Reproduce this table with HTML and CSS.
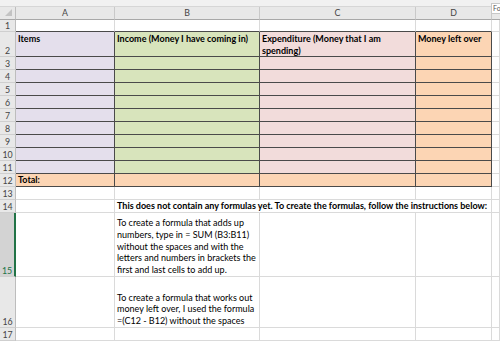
FILE: index.html
```html
<!DOCTYPE html>
<html>
<head>
<meta charset="utf-8">
<link rel="stylesheet" href="styles.css">
</head>
<body>
<div class="sheet">
  <div class="strip"></div>

  <div class="corner"><svg width="8" height="8" viewBox="0 0 8 8"><polygon points="7,0 7,7 0,7" fill="#c3c3c3"/></svg></div>
  <div class="ch">A</div><div class="ch">B</div><div class="ch">C</div><div class="ch">D</div><div class="ch last"></div>

  <div class="rh">1</div><div class="c above"></div><div class="c above"></div><div class="c above"></div><div class="c above"></div><div class="c"></div>

  <div class="rh">2</div>
  <div class="c t pa tp"><b>Items</b></div>
  <div class="c t pb tp"><b>Income (Money I have coming in)</b></div>
  <div class="c t pc tp"><b>Expenditure (Money that I am<br>spending)</b></div>
  <div class="c t pd tp"><b>Money left over</b></div>
  <div class="c"></div>

  <div class="rh">3</div><div class="c t pa"></div><div class="c t pb"></div><div class="c t pc"></div><div class="c t pd"></div><div class="c"></div>
  <div class="rh">4</div><div class="c t pa"></div><div class="c t pb"></div><div class="c t pc"></div><div class="c t pd"></div><div class="c"></div>
  <div class="rh">5</div><div class="c t pa"></div><div class="c t pb"></div><div class="c t pc"></div><div class="c t pd"></div><div class="c"></div>
  <div class="rh">6</div><div class="c t pa"></div><div class="c t pb"></div><div class="c t pc"></div><div class="c t pd"></div><div class="c"></div>
  <div class="rh">7</div><div class="c t pa"></div><div class="c t pb"></div><div class="c t pc"></div><div class="c t pd"></div><div class="c"></div>
  <div class="rh">8</div><div class="c t pa"></div><div class="c t pb"></div><div class="c t pc"></div><div class="c t pd"></div><div class="c"></div>
  <div class="rh">9</div><div class="c t pa"></div><div class="c t pb"></div><div class="c t pc"></div><div class="c t pd"></div><div class="c"></div>
  <div class="rh">10</div><div class="c t pa"></div><div class="c t pb"></div><div class="c t pc"></div><div class="c t pd"></div><div class="c"></div>
  <div class="rh">11</div><div class="c t pa"></div><div class="c t pb"></div><div class="c t pc"></div><div class="c t pd"></div><div class="c"></div>

  <div class="rh">12</div>
  <div class="c t po"><b>Total:</b></div><div class="c t po"></div><div class="c t po"></div><div class="c t po"></div><div class="c"></div>

  <div class="rh">13</div><div class="c"></div><div class="c"></div><div class="c"></div><div class="c"></div><div class="c"></div>

  <div class="rh">14</div><div class="c"></div>
  <div class="c span3 nowrap"><b>This does not contain any formulas yet. To create the formulas, follow the instructions below:</b></div>
  <div class="c"></div>

  <div class="rh sel">15</div><div class="c"></div>
  <div class="c nowrap">To create a formula that adds up<br>numbers, type in = SUM (B3:B11)<br>without the spaces and with the<br>letters and numbers in brackets the<br>first and last cells to add up.</div>
  <div class="c"></div><div class="c"></div><div class="c"></div>

  <div class="rh">16</div><div class="c"></div>
  <div class="c nowrap"><br>To create a formula that works out<br>money left over, I used the formula<br>=(C12 - B12) without the spaces</div>
  <div class="c"></div><div class="c"></div><div class="c"></div>

  <div class="rh">17</div><div class="c"></div><div class="c"></div><div class="c"></div><div class="c"></div><div class="c"></div>
</div>
<div class="tip">Fo</div>
</body>
</html>
```
FILE: styles.css
```css
html, body {
  margin: 0;
  padding: 0;
  background: #ffffff;
  overflow: hidden;
}
body {
  width: 500px;
  height: 342px;
  position: relative;
  font-family: Lato, "Liberation Sans", sans-serif;
  font-size: 9px;
  color: #000;
}
b { font-weight: 700; }
.sheet {
  display: grid;
  grid-template-columns: 16px 99px 145px 156px 76px 8px;
  grid-template-rows: 7px 13px 12px 25px repeat(9, 13px) 13px 13px 13px 64px 51px 13px 1fr;
  width: 500px;
  height: 342px;
}
.strip {
  grid-column: 1 / -1;
  background: #f1f1f1;
  border-bottom: 1px solid #d6d6d6;
  box-sizing: border-box;
}
.corner {
  background: #e8e8e8;
  border-right: 1px solid #bdbdbd;
  border-bottom: 1px solid #a8a8a8;
  box-sizing: border-box;
  display: flex;
  align-items: flex-end;
  justify-content: flex-end;
  padding: 0 2px 2px 0;
}
.corner svg { display: block; }
.ch {
  background: #e8e8e8;
  border-right: 1px solid #c9c9c9;
  border-bottom: 1px solid #a8a8a8;
  box-sizing: border-box;
  color: #444;
  font-size: 8.8px;
  display: flex;
  align-items: center;
  justify-content: center;
  line-height: 12px;
}
.ch.last { border-right: none; }
.rh {
  background: #e8e8e8;
  border-right: 1px solid #bdbdbd;
  border-bottom: 1px solid #cfcfcf;
  box-sizing: border-box;
  color: #444;
  font-size: 8.8px;
  line-height: 11px;
  display: flex;
  align-items: flex-end;
  justify-content: center;
}
.rh.sel {
  background: #d3d3d3;
  border-right: 2px solid #217346;
  color: #217346;
}
.c {
  border-right: 1px solid #dadada;
  border-bottom: 1px solid #dadada;
  box-sizing: border-box;
  padding: 0 2px;
  line-height: 11.8px;
  display: flex;
  flex-direction: column;
  justify-content: flex-end;
  min-width: 0;
}
.c.above { border-bottom-color: #4a4a4a; }
.c.t {
  border-right-color: #4a4a4a;
  border-bottom-color: #4a4a4a;
}
.c.tp { justify-content: flex-start; padding-top: 1px; }
.pa { background: #e4dfec; }
.pb { background: #d8e4bc; }
.pc { background: #f2dcdb; }
.pd { background: #fcd5b4; }
.po { background: #fcd5b4; }
.nowrap { white-space: nowrap; overflow: visible; }
.span3 { grid-column: span 3; }
.tip {
  position: absolute;
  left: 491px;
  top: 3px;
  width: 12px;
  height: 11px;
  box-sizing: border-box;
  background: #fff;
  border: 1px solid #c8c8c8;
  border-right: none;
  color: #555;
  font-size: 7px;
  line-height: 9px;
  padding-left: 1px;
  white-space: nowrap;
}
```
